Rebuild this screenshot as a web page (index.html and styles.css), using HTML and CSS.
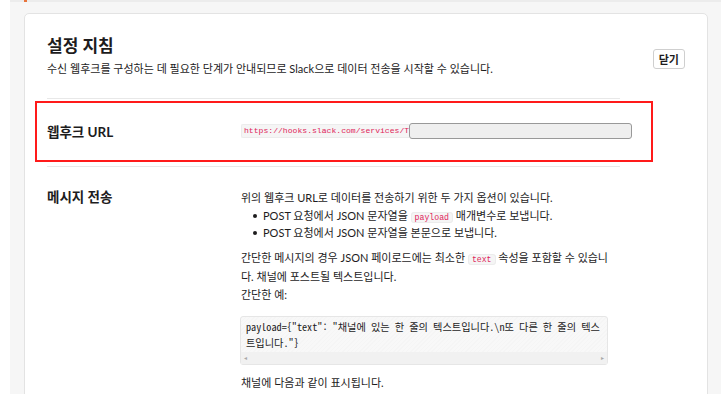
FILE: index.html
```html
<!DOCTYPE html>
<html lang="ko">
<head>
<meta charset="utf-8">
<title>설정 지침</title>
<link rel="stylesheet" href="styles.css">
</head>
<body>
<div class="shell">
  <div class="topband"><span class="tick"></span></div>
  <div class="card">
    <div class="head">
      <div class="head-text">
        <h1 class="title">설정 지침</h1>
        <p class="sub">수신 웹후크를 구성하는 데 필요한 단계가 안내되므로 Slack으로 데이터 전송을 시작할 수 있습니다.</p>
      </div>
      <button class="close">닫기</button>
    </div>
    <div class="rows">
      <div class="row row-url">
        <div class="label">웹후크 URL</div>
        <div class="value url-value">
          <code class="url-code">https://hooks.slack.com/services/T</code><span class="redacted"></span>
        </div>
        <div class="highlight"></div>
      </div>
      <div class="row row-send">
        <div class="label">메시지 전송</div>
        <div class="value send-value">
          <p class="para">위의 웹후크 URL로 데이터를 전송하기 위한 두 가지 옵션이 있습니다.</p>
          <ul class="list">
            <li class="item">POST 요청에서 JSON 문자열을 <code class="inline">payload</code> 매개변수로 보냅니다.</li>
            <li class="item">POST 요청에서 JSON 문자열을 본문으로 보냅니다.</li>
          </ul>
          <p class="para para-gap">간단한 메시지의 경우 JSON 페이로드에는 최소한 <code class="inline">text</code> 속성을 포함할 수 있습니다. 채널에 포스트될 텍스트입니다.<br>간단한 예:</p>
          <div class="codeblock">
            <pre class="pre">payload={"text": "채널에 있는 한 줄의 텍스트입니다.\n또 다른 한 줄의 텍스트입니다."}</pre>
            <div class="scrollbar"><span class="arr">&#9666;</span><span class="arr">&#9656;</span></div>
          </div>
          <p class="para para-last">채널에 다음과 같이 표시됩니다.</p>
        </div>
      </div>
    </div>
  </div>
</div>
</body>
</html>
```
FILE: styles.css
```css
html, body {
  margin: 0;
  padding: 0;
  background: #ffffff;
  height: 100%;
  overflow: hidden;
}
body {
  font-family: "Lato", "Noto Sans CJK KR", sans-serif;
  color: #1d1c1d;
}
.shell {
  margin-left: 10px;
  background: #f6f6f6;
  min-height: 394px;
  padding: 0 13px 0 14px;
}
.topband {
  height: 2px;
  background: #ececec;
  margin: 0 -13px 11px -14px;
  padding-left: 14px;
}
.tick {
  display: block;
  width: 3px;
  height: 2px;
  background: #e8743b;
}
.card {
  background: #ffffff;
  border: 1px solid #e3e3e3;
  border-radius: 5px;
  padding: 21px 22px 0 22px;
  min-height: 400px;
}
.head {
  display: flex;
  align-items: center;
  justify-content: space-between;
}
.title {
  margin: 0;
  font-size: 17px;
  line-height: 22px;
  font-weight: 700;
}
.sub {
  margin: 4px 0 0;
  font-size: 11px;
  line-height: 16px;
}
.close {
  font-family: inherit;
  font-size: 11px;
  font-weight: 700;
  color: #1d1c1d;
  background: #ffffff;
  border: 1px solid #cfcfcf;
  border-radius: 3px;
  padding: 0 5px;
  height: 20px;
  margin-top: 6px;
}
.rows {
  width: 573px;
  margin-top: 21px;
  border-top: 1px solid #e8e8e8;
}
.row {
  display: flex;
  border-bottom: 1px solid #e8e8e8;
  position: relative;
}
.row-url {
  box-sizing: border-box;
  height: 68px;
  padding-bottom: 4px;
  align-items: center;
}
.label {
  width: 194px;
  flex: none;
  font-size: 13.5px;
  font-weight: 700;
}
.url-value {
  display: flex;
  align-items: center;
}
.url-code {
  font-family: "Liberation Mono", monospace;
  font-size: 8.1px;
  line-height: 12px;
  color: #e01e5a;
  background: #f5f5f5;
  border: 1px solid #ececec;
  border-right: 0;
  border-radius: 2px 0 0 2px;
  padding: 0 0 0 2px;
}
.redacted {
  display: block;
  width: 221px;
  height: 14px;
  background: #efefef;
  border: 1px solid #999999;
  border-radius: 3px;
  flex: none;
}
.highlight {
  position: absolute;
  left: -12px;
  right: -33px;
  top: 2px;
  bottom: 4px;
  border: 2px solid #ff1a1a;
  pointer-events: none;
}
.row-send {
  padding-top: 22px;
  border-bottom: 0;
}
.row-send .label {
  line-height: 16px;
}
.value {
  flex: 1;
}
.send-value {
  padding-top: 0;
}
.para {
  margin: 0;
  font-size: 11px;
  line-height: 17.5px;
}
.para-gap {
  margin-top: 7px;
}
.list {
  margin: 0;
  padding: 0 0 0 22px;
  list-style: none;
  font-size: 11px;
  line-height: 17.5px;
}
.item {
  height: 17.5px;
}
.item::before {
  content: "";
  display: inline-block;
  width: 4px;
  height: 4px;
  border-radius: 50%;
  background: #1d1c1d;
  margin: 0 6px 0 -10px;
  vertical-align: 2px;
}
.inline {
  font-family: "Liberation Mono", monospace;
  font-size: 8.2px;
  color: #e01e5a;
  background: #f5f5f5;
  border: 1px solid #ececec;
  border-radius: 3px;
  padding: 0 3px;
}
.codeblock {
  margin: 13px 2px 0 -1px;
  background-color: #f8f8f8;
  background-image: repeating-linear-gradient(135deg, rgba(0,0,0,0.012) 0 1px, transparent 1px 3px);
  border: 1px solid #e6e6e6;
  border-radius: 3px;
  width: 366px;
}
.pre {
  margin: 0;
  padding: 2px 3px 0 5px;
  font-family: "Noto Sans Mono CJK KR", "Liberation Mono", monospace;
  font-size: 10.2px;
  line-height: 16px;
  white-space: pre-wrap;
  word-break: break-all;
  color: #1d1c1d;
}
.scrollbar {
  display: flex;
  justify-content: space-between;
  align-items: center;
  height: 12px;
  background: #f1f1f1;
  padding: 0 3px;
  margin-top: 1px;
}
.arr {
  font-size: 6px;
  color: #a8a8a8;
  line-height: 12px;
}
.para-last {
  margin-top: 9px;
}
```
